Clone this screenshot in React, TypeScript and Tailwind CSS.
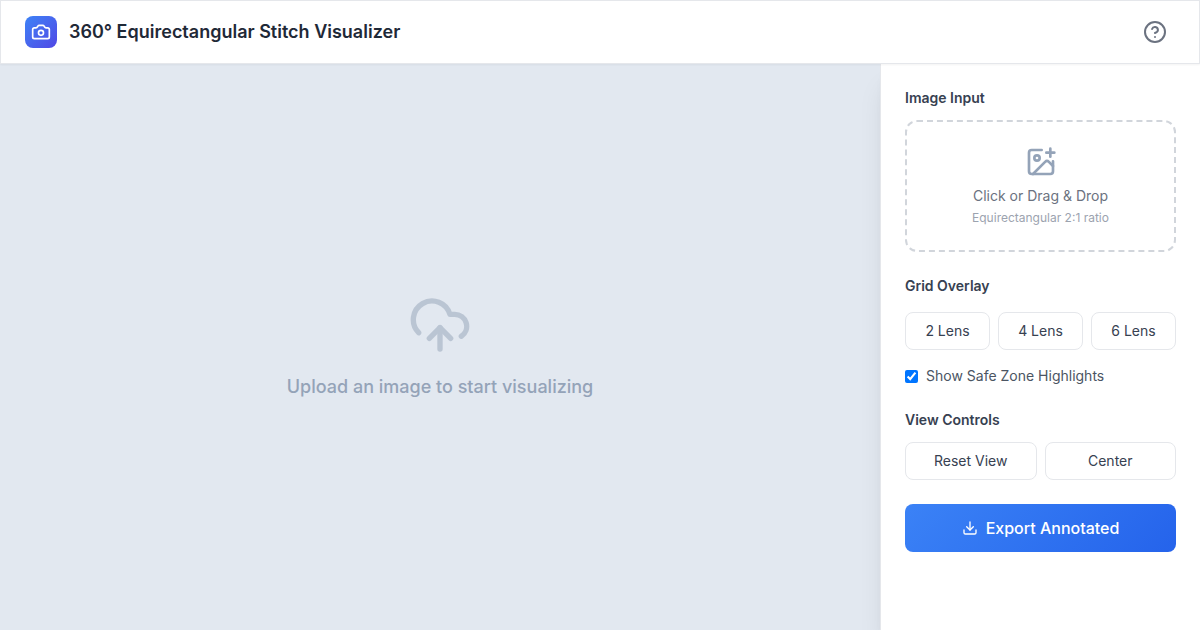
import { useState } from "react";
import type { ReactNode } from "react";
import {
  Camera,
  CircleQuestionMark,
  CloudUpload,
  Download,
  ImagePlus,
} from "lucide-react";

const lensCounts = [2, 4, 6];

const PanelButton = ({ children }: { children: ReactNode }) => (
  <button
    type="button"
    className="flex-1 rounded-lg border border-[#e5e7eb] bg-white px-3 py-2 text-sm text-[#374151] hover:bg-gray-50"
  >
    {children}
  </button>
);

const Header = () => (
  <header className="relative z-20 flex h-16 items-center justify-between border border-[#e5e7eb] bg-white px-6 shadow-xs">
    {/* Logo */}
    <div className="flex items-center gap-3">
      <div className="flex size-8 items-center justify-center rounded-lg bg-linear-135 from-[#3b82f6] to-[#4f46e5] text-white">
        <Camera className="size-5" />
      </div>
      <h1 className="text-lg font-semibold text-[#1f2937]">
        360° Equirectangular Stitch Visualizer
      </h1>
    </div>

    {/* Help */}
    <button
      type="button"
      aria-label="Help"
      className="rounded-full p-2 text-[#6b7280] hover:bg-gray-100"
    >
      <CircleQuestionMark className="size-6" />
    </button>
  </header>
);

const Sidebar = () => {
  const [safeZone, setSafeZone] = useState(true);

  return (
    <aside className="relative z-10 flex w-80 shrink-0 flex-col gap-6 border-l border-[#e5e7eb] bg-white p-6 shadow-xl">
      {/* Image Input */}
      <section className="flex flex-col gap-3">
        <h2 className="text-sm font-semibold text-[#374151]">Image Input</h2>
        <button
          type="button"
          className="flex flex-col items-center rounded-xl border-2 border-dashed border-[#d1d5db] p-6 hover:border-blue-400"
        >
          <ImagePlus className="size-8 text-[#94a3b8]" />
          <span className="mt-2 text-sm text-[#6b7280]">Click or Drag &amp; Drop</span>
          <span className="mt-1 text-xs text-[#9ca3af]">Equirectangular 2:1 ratio</span>
        </button>
      </section>

      {/* Grid Overlay */}
      <section className="flex flex-col gap-4">
        <h2 className="text-sm font-semibold text-[#374151]">Grid Overlay</h2>
        <div className="flex gap-2">
          {lensCounts.map((count) => (
            <PanelButton key={count}>{count} Lens</PanelButton>
          ))}
        </div>
        <label className="flex items-center gap-2 text-sm text-[#4b5563]">
          <input
            type="checkbox"
            checked={safeZone}
            onChange={(e) => setSafeZone(e.target.checked)}
          />
          Show Safe Zone Highlights
        </label>
      </section>

      {/* View Controls */}
      <section className="flex flex-col gap-3">
        <h2 className="text-sm font-semibold text-[#374151]">View Controls</h2>
        <div className="flex gap-2">
          <PanelButton>Reset View</PanelButton>
          <PanelButton>Center</PanelButton>
        </div>
      </section>

      {/* Export */}
      <button
        type="button"
        className="flex items-center justify-center gap-2 rounded-lg bg-linear-135 from-[#3b82f6] to-[#2563eb] px-4 py-3 font-medium text-white"
      >
        <Download className="size-4" />
        Export Annotated
      </button>
    </aside>
  );
};

const App = () => (
  <div className="flex min-h-screen flex-col bg-white font-['Inter',sans-serif]">
    <Header />
    <div className="flex flex-1">
      {/* Canvas */}
      <main className="flex flex-1 flex-col items-center justify-center bg-slate-200 text-[#94a3b8]">
        <CloudUpload className="mb-4 size-16 opacity-50" />
        <p className="text-lg font-medium">Upload an image to start visualizing</p>
      </main>
      <Sidebar />
    </div>
  </div>
);

export default App;
